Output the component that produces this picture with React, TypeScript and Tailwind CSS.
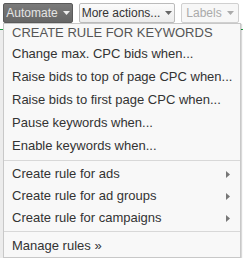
const keywordItems = [
  'Change max. CPC bids when...',
  'Raise bids to top of page CPC when...',
  'Raise bids to first page CPC when...',
  'Pause keywords when...',
  'Enable keywords when...',
];

const subMenus = ['Create rule for ads', 'Create rule for ad groups', 'Create rule for campaigns'];

function Caret({ color }: { color: string }) {
  return (
    <svg width="7" height="4" viewBox="0 0 7 4" className="ml-[5px] shrink-0">
      <path d="M0 0h7L3.5 4z" fill={color} />
    </svg>
  );
}

export default function App() {
  return (
    <div className="relative w-[243px] h-[258px] bg-white overflow-hidden font-['Liberation_Sans',Arial,sans-serif] text-[13px] text-[#333]">
      {/* page behind the menu */}
      <div className="absolute left-0 top-[29px] w-full h-px bg-[#1a9c3e]" />
      <div className="absolute left-0 top-[30px] w-[3px] h-[228px] bg-[#ececec]" />

      {/* toolbar */}
      <div className="flex items-center gap-[6px] pl-[3px] pt-[3px] whitespace-nowrap text-[12px]">
        <div className="flex items-center justify-center w-[70px] h-[20px] shrink-0 rounded-[2px] border border-[#5a5a5a] bg-gradient-to-b from-[#7a7a7a] to-[#666] text-[#e4e4e4]">
          Automate
          <Caret color="#eee" />
        </div>
        <div className="flex items-center justify-center w-[96px] h-[20px] shrink-0 rounded-[2px] border border-[#bbb] bg-gradient-to-b from-[#fbfbfb] to-[#ececec] text-[#333]">
          More actions...
          <Caret color="#666" />
        </div>
        <div className="flex items-center justify-center w-[58px] h-[20px] shrink-0 rounded-[2px] border border-[#d0d0d0] bg-[#f7f7f7] text-[#aaa]">
          Labels
          <Caret color="#aaa" />
        </div>
      </div>

      {/* dropdown menu */}
      <div className="absolute left-[3px] top-[23px] w-[238px] bg-[#f8f8f8] border border-[#c8c8c8] shadow-[1px_1px_1px_rgba(0,0,0,0.15)] whitespace-nowrap">
        <div className="pl-[8px] h-[18px] leading-[18px] text-[#555]">CREATE RULE FOR KEYWORDS</div>
        {keywordItems.map((t) => (
          <div key={t} className="pl-[8px] h-[23px] flex items-center">
            {t}
          </div>
        ))}
        <div className="mt-[3px] mb-[2px] h-px bg-[#d8d8d8]" />
        {subMenus.map((t) => (
          <div key={t} className="pl-[8px] pr-[10px] h-[22px] flex items-center justify-between">
            {t}
            <svg width="4" height="7" viewBox="0 0 4 7">
              <path d="M0 0l4 3.5L0 7z" fill="#777" />
            </svg>
          </div>
        ))}
        <div className="mt-[2px] mb-[3px] h-px bg-[#d8d8d8]" />
        <div className="pl-[8px] h-[22px] flex items-center">Manage rules »</div>
      </div>
    </div>
  );
}
